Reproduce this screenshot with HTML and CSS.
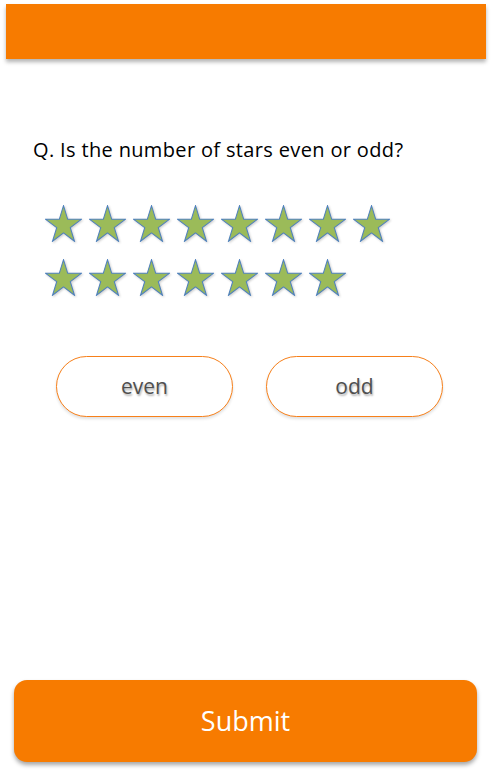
FILE: index.html
```html
<!DOCTYPE html>
<html lang="en">
<head>
<meta charset="utf-8">
<title>Quiz</title>
<link rel="stylesheet" href="styles.css">
</head>
<body>
<svg class="defs" width="0" height="0" aria-hidden="true">
  <defs>
    <symbol id="star" viewBox="-2 -2 104 104" preserveAspectRatio="none">
      <polygon points="50,0 61.8,38.2 100,38.2 69.1,61.8 80.9,100 50,76.4 19.1,100 30.9,61.8 0,38.2 38.2,38.2" fill="#9bbb59" stroke="#4f81bd" stroke-width="3" stroke-linejoin="miter"/>
    </symbol>
  </defs>
</svg>
<div class="screen">
  <header class="topbar"></header>
  <main class="content">
    <p class="question">Q. Is the number of stars even or odd?</p>
    <div class="stars">
      <div class="star-row">
        <svg class="star"><use href="#star"/></svg>
        <svg class="star"><use href="#star"/></svg>
        <svg class="star"><use href="#star"/></svg>
        <svg class="star"><use href="#star"/></svg>
        <svg class="star"><use href="#star"/></svg>
        <svg class="star"><use href="#star"/></svg>
        <svg class="star"><use href="#star"/></svg>
        <svg class="star"><use href="#star"/></svg>
      </div>
      <div class="star-row">
        <svg class="star"><use href="#star"/></svg>
        <svg class="star"><use href="#star"/></svg>
        <svg class="star"><use href="#star"/></svg>
        <svg class="star"><use href="#star"/></svg>
        <svg class="star"><use href="#star"/></svg>
        <svg class="star"><use href="#star"/></svg>
        <svg class="star"><use href="#star"/></svg>
      </div>
    </div>
    <div class="options">
      <button class="option">even</button>
      <button class="option">odd</button>
    </div>
  </main>
  <button class="submit">Submit</button>
</div>
</body>
</html>
```
FILE: styles.css
```css
html, body {
  margin: 0;
  padding: 0;
  background: #ffffff;
}
.defs {
  position: absolute;
  width: 0;
  height: 0;
  overflow: hidden;
}
.screen {
  height: 770px;
  display: flex;
  flex-direction: column;
  font-family: "Open Sans", "DejaVu Sans", sans-serif;
}
.topbar {
  margin: 4px 6px 0 6px;
  height: 55px;
  background: #f77b00;
  box-shadow: 0 3px 4px rgba(0, 0, 0, 0.3);
  flex: none;
}
.content {
  flex: 1;
  display: flex;
  flex-direction: column;
}
.question {
  margin: 78px 0 0 33px;
  font-size: 20px;
  letter-spacing: 0.35px;
  line-height: 26px;
  color: #000000;
}
.stars {
  margin: 42px 0 0 45px;
  display: flex;
  flex-direction: column;
  gap: 17px;
}
.star-row {
  display: flex;
  gap: 7px;
}
.star {
  width: 37px;
  height: 37px;
  display: block;
  filter: drop-shadow(1px 1px 1px rgba(0, 0, 0, 0.2));
}
.options {
  margin: 60px 0 0 56px;
  display: flex;
  gap: 33px;
}
.option {
  width: 177px;
  height: 61px;
  border: 1px solid #f7801a;
  border-radius: 31px;
  background: #ffffff;
  box-shadow: 0 2px 3px rgba(0, 0, 0, 0.12);
  font-family: "Open Sans", "DejaVu Sans", sans-serif;
  font-size: 21px;
  color: #4f4f4f;
  text-shadow: 1px 2px 2px rgba(0, 0, 0, 0.3);
  padding: 0 0 2px 0;
}
.submit {
  flex: none;
  margin: 0 15px 8px 14px;
  height: 82px;
  border: none;
  border-radius: 13px;
  background: #f77b00;
  box-shadow: 0 3px 4px rgba(0, 0, 0, 0.35);
  color: #ffffff;
  font-family: "Open Sans", "DejaVu Sans", sans-serif;
  font-size: 27px;
  padding: 0 0 2px 0;
}
```
